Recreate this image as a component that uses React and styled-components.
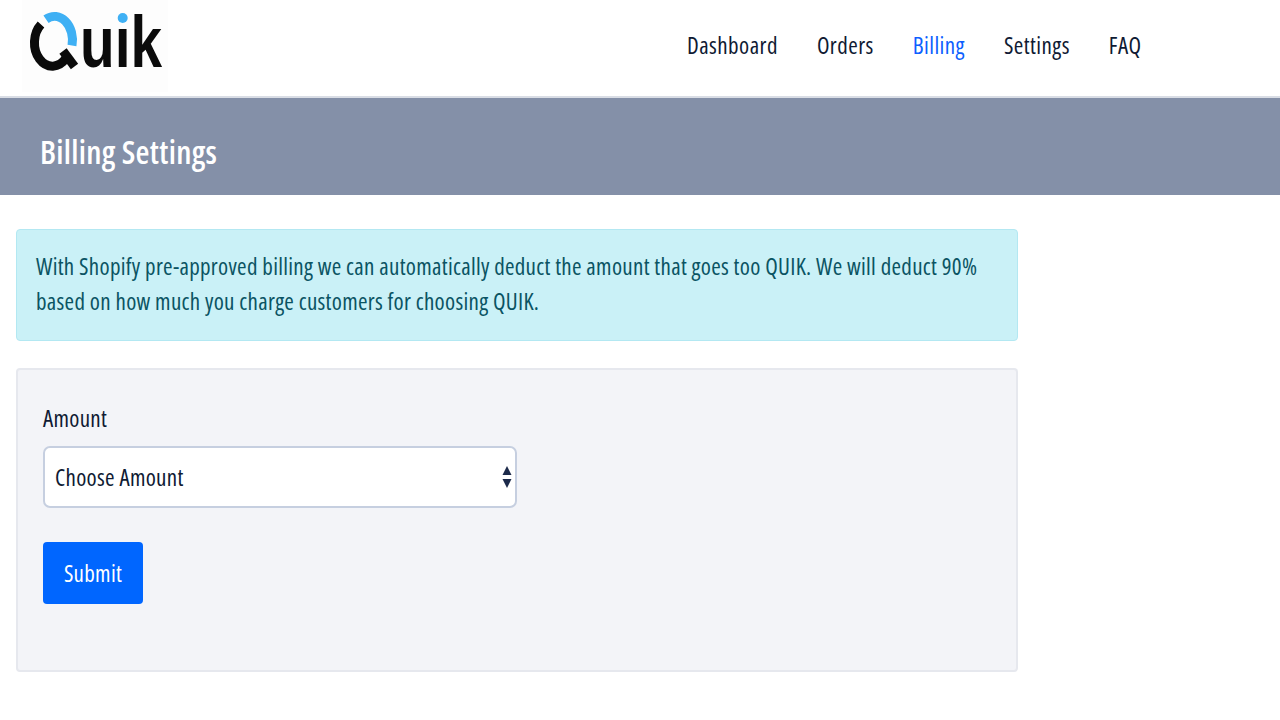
import React from 'react'
import styled, { createGlobalStyle } from 'styled-components'

const GlobalStyle = createGlobalStyle`
  html, body {
    margin: 0;
    padding: 0;
    background: #ffffff;
    font-family: 'Open Sans', 'Noto Sans', sans-serif;
    font-stretch: 75%;
    letter-spacing: 0.3px;
    color: #0f1a33;
  }
  * { box-sizing: border-box; }
`

const navItems = [
  { label: 'Dashboard' },
  { label: 'Orders' },
  { label: 'Billing', active: true },
  { label: 'Settings' },
  { label: 'FAQ' },
]

const Logo = () => (
  <LogoBox>
    <LogoSvg width="146" height="92" viewBox="22 0 146 92">
      {/* Q ring, split into a black and a blue arc */}
      <path d="M 41 24.5 A 18 23.5 0 1 0 66 58.1" fill="none" stroke="#0b0b0b" strokeWidth="9" />
      <path d="M 63 51 L 74.5 66.5" fill="none" stroke="#0b0b0b" strokeWidth="9" />
      <path d="M 46 19.3 A 18 23.5 0 0 1 72 45.5" fill="none" stroke="#3fb0f4" strokeWidth="9" />
      <LogoText x="80" y="67" textLength="82" lengthAdjust="spacingAndGlyphs">uık</LogoText>
      <circle cx="122.7" cy="18" r="5" fill="#3fb0f4" />
    </LogoSvg>
  </LogoBox>
)

const App = () => {
  return (
    <Page>
      <GlobalStyle />
      <Header>
        <Logo />
        <Nav>
          {navItems.map((item) => (
            <NavLink key={item.label} $active={item.active}>
              {item.label}
            </NavLink>
          ))}
        </Nav>
      </Header>
      <Banner>
        <BannerTitle>Billing Settings</BannerTitle>
      </Banner>
      <Content>
        <Alert>
          With Shopify pre-approved billing we can automatically deduct the amount that goes too QUIK. We will deduct 90%
          based on how much you charge customers for choosing QUIK.
        </Alert>
        <Card>
          <Label htmlFor="amount">Amount</Label>
          <SelectWrap>
            <Select id="amount" defaultValue="">
              <option value="">Choose Amount</option>
            </Select>
            <Arrows width="10" height="22" viewBox="0 0 10 22">
              <path d="M5 0 L9.5 9 L0.5 9 Z" fill="#1c2a4a" />
              <path d="M0.5 13 L9.5 13 L5 22 Z" fill="#1c2a4a" />
            </Arrows>
          </SelectWrap>
          <SubmitButton type="button">Submit</SubmitButton>
        </Card>
      </Content>
    </Page>
  )
}

const Page = styled.div`
  width: 1280px;
  height: 720px;
  overflow: hidden;
`
const Header = styled.header`
  height: 98px;
  padding-left: 22px;
  display: flex;
  align-items: flex-start;
  border-bottom: 2px solid #d9dde5;
`
const LogoBox = styled.div`
  width: 146px;
  height: 92px;
  background: #fdfdfd;
  flex-shrink: 0;
`
const LogoSvg = styled.svg`
  display: block;
  overflow: visible;
`
const LogoText = styled.text`
  font-family: 'Liberation Sans', sans-serif;
  font-stretch: normal;
  letter-spacing: 0;
  font-size: 72px;
  font-weight: 700;
  fill: #0b0b0b;
`
const Nav = styled.nav`
  margin-left: 519px;
  height: 89px;
  display: flex;
  align-items: center;
  gap: 39px;
`
const NavLink = styled.a`
  font-size: 23px;
  font-weight: 500;
  letter-spacing: 0.45px;
  color: ${(p) => (p.$active ? '#0d5fff' : '#0f1a33')};
`
const Banner = styled.div`
  height: 97px;
  background: #8490a8;
  padding: 9px 0 0 40px;
  display: flex;
  align-items: center;
`
const BannerTitle = styled.h1`
  margin: 0;
  font-size: 32px;
  font-weight: 600;
  color: #ffffff;
`
const Content = styled.main`
  width: 1002px;
  margin: 34px 0 0 16px;
`
const Alert = styled.div`
  height: 112px;
  padding: 19px 19px;
  background: #caf1f7;
  border: 1px solid #b3e8f2;
  border-radius: 4px;
  color: #0a5463;
  font-size: 23px;
  line-height: 35px;
`
const Card = styled.section`
  margin-top: 27px;
  height: 304px;
  padding: 33px 25px;
  background: #f3f4f8;
  border: 2px solid #e6e8ee;
  border-radius: 4px;
`
const Label = styled.label`
  display: block;
  font-size: 23px;
  line-height: 30px;
  color: #0f1a33;
`
const SelectWrap = styled.div`
  position: relative;
  width: 474px;
  margin-top: 13px;
`
const Select = styled.select`
  appearance: none;
  display: block;
  width: 100%;
  height: 62px;
  padding: 0 10px;
  background: #ffffff;
  border: 2px solid #c6cfe0;
  border-radius: 7px;
  font-family: inherit;
  font-stretch: inherit;
  letter-spacing: inherit;
  font-size: 23px;
  color: #0f1a33;
`
const Arrows = styled.svg`
  position: absolute;
  right: 5px;
  top: 20px;
  pointer-events: none;
`
const SubmitButton = styled.button`
  display: block;
  width: 100px;
  height: 62px;
  margin-top: 34px;
  padding: 0;
  background: #0066ff;
  border: 0;
  border-radius: 4px;
  color: #ffffff;
  font-family: inherit;
  font-stretch: inherit;
  letter-spacing: inherit;
  font-size: 23px;
`

export default App
